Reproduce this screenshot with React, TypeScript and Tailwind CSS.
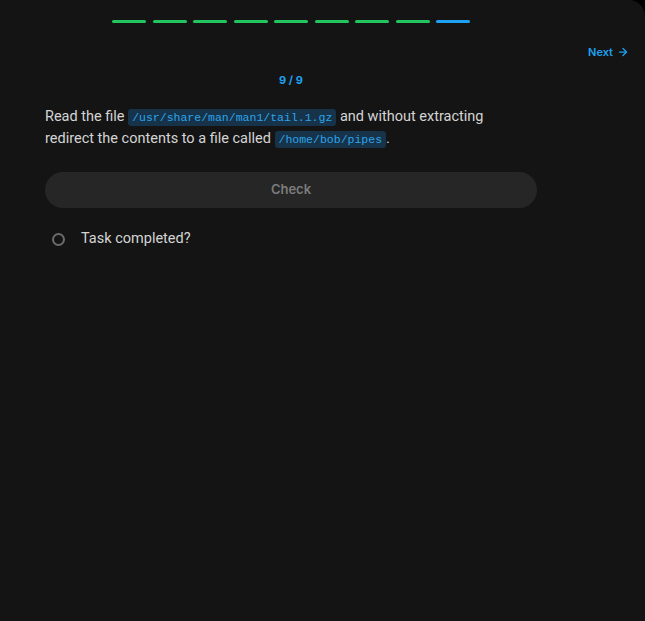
import { ArrowRight } from 'lucide-react'

const steps = [1, 2, 3, 4, 5, 6, 7, 8, 9]
const current = 9

function Code({ children }: { children: string }) {
  return (
    <code className="rounded-[3px] bg-[#163349] px-1 py-[2px] font-['Liberation_Mono',monospace] text-[11.5px] leading-none text-[#2ea3ea]">
      {children}
    </code>
  )
}

export default function App() {
  return (
    <div className="min-h-screen bg-black font-['Roboto',sans-serif]">
      <div className="h-[621px] rounded-tr-2xl bg-[#141414]">
        {/* Progress */}
        <div className="ml-[45px] flex w-[492px] justify-center gap-[6.5px] pt-5">
          {steps.map((s) => (
            <div
              key={s}
              className={`h-[3px] w-[34px] rounded-full ${s === current ? 'bg-[#1ea1f1]' : 'bg-[#22c55e]'}`}
            />
          ))}
        </div>

        <div className="mt-[23px] flex justify-end pr-4">
          <button className="flex items-center gap-1 font-['Inter',sans-serif] text-[11px] font-semibold leading-3 text-[#1ea1f1]">
            Next
            <ArrowRight className="h-3 w-3" strokeWidth={2.5} />
          </button>
        </div>

        <div className="ml-[45px] w-[492px]">
          <p className="mt-[14px] text-center font-['Inter',sans-serif] text-[11px] font-bold leading-4 text-[#1ea1f1]">
            {current} / {steps.length}
          </p>

          <p className="mt-[18px] text-[14.5px] leading-[22px] text-[#d4d4d4]">
            Read the file <Code>/usr/share/man/man1/tail.1.gz</Code> and without
            extracting
            <br />
            redirect the contents to a file called <Code>/home/bob/pipes</Code>.
          </p>

          <button className="mt-[22px] h-9 w-full rounded-full bg-[#262626] font-['Inter',sans-serif] text-[13px] font-semibold text-[#7c7c7c]">
            Check
          </button>

          <div className="mt-[21px] flex items-center gap-[16px] pl-[7px]">
            <span className="h-[13px] w-[13px] rounded-full border-2 border-[#6b6b6b]" />
            <span className="text-[14.5px] leading-5 text-[#d4d4d4]">Task completed?</span>
          </div>
        </div>
      </div>
    </div>
  )
}
